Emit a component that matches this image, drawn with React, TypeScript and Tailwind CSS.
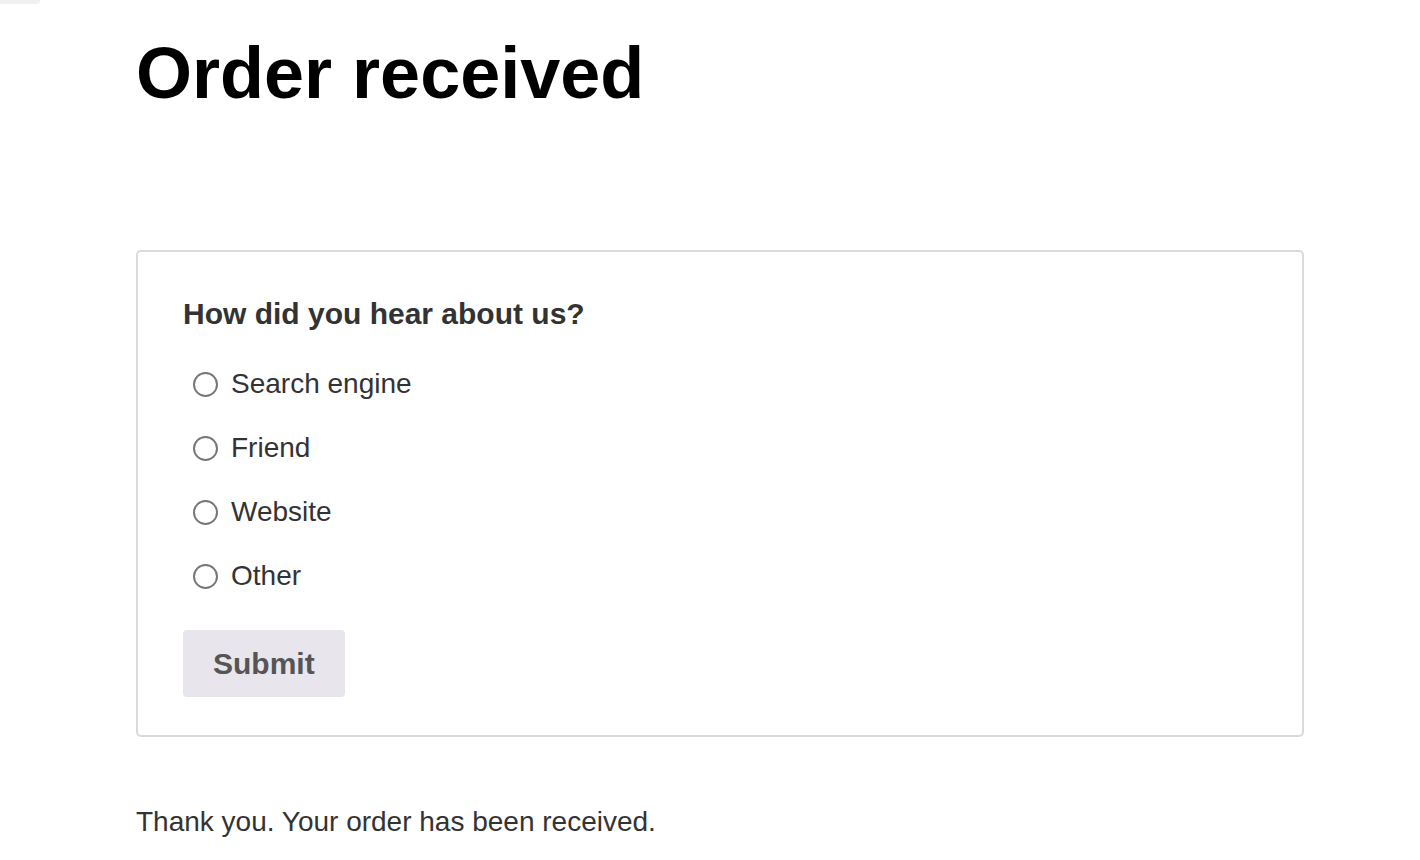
const options = ["Search engine", "Friend", "Website", "Other"];

export default function App() {
  return (
    <div className="min-h-[860px] bg-white font-['Liberation_Sans',Arial,sans-serif]">
      <div className="h-[4px] w-[40px] rounded-br-[4px] bg-[#f0f0f0]" />
      <div className="ml-[136px] w-[1168px]">
        <h1 className="mt-[33px] text-[72px] font-bold leading-[72px] text-black">
          Order received
        </h1>

        <form className="mt-[141px] rounded-[5px] border-2 border-[#dadada] px-[45px] pb-[38px] pt-[44px]">
          <h2 className="text-[30px] font-bold leading-[36px] text-[#333]">
            How did you hear about us?
          </h2>
          <div className="mt-[20px] flex flex-col">
            {options.map((opt) => (
              <label key={opt} className="flex h-[64px] items-center">
                <span className="ml-[10px] h-[25px] w-[25px] rounded-full border-2 border-[#777]" />
                <span className="ml-[13px] text-[28px] leading-[32px] text-[#333]">{opt}</span>
              </label>
            ))}
          </div>
          <button
            type="button"
            className="mt-[22px] h-[67px] rounded-[4px] bg-[#e8e6ec] px-[30px] text-[30px] font-bold text-[#555]"
          >
            Submit
          </button>
        </form>

        <p className="mt-[69px] text-[28px] leading-[32px] text-[#333]">
          Thank you. Your order has been received.
        </p>
      </div>
    </div>
  );
}
